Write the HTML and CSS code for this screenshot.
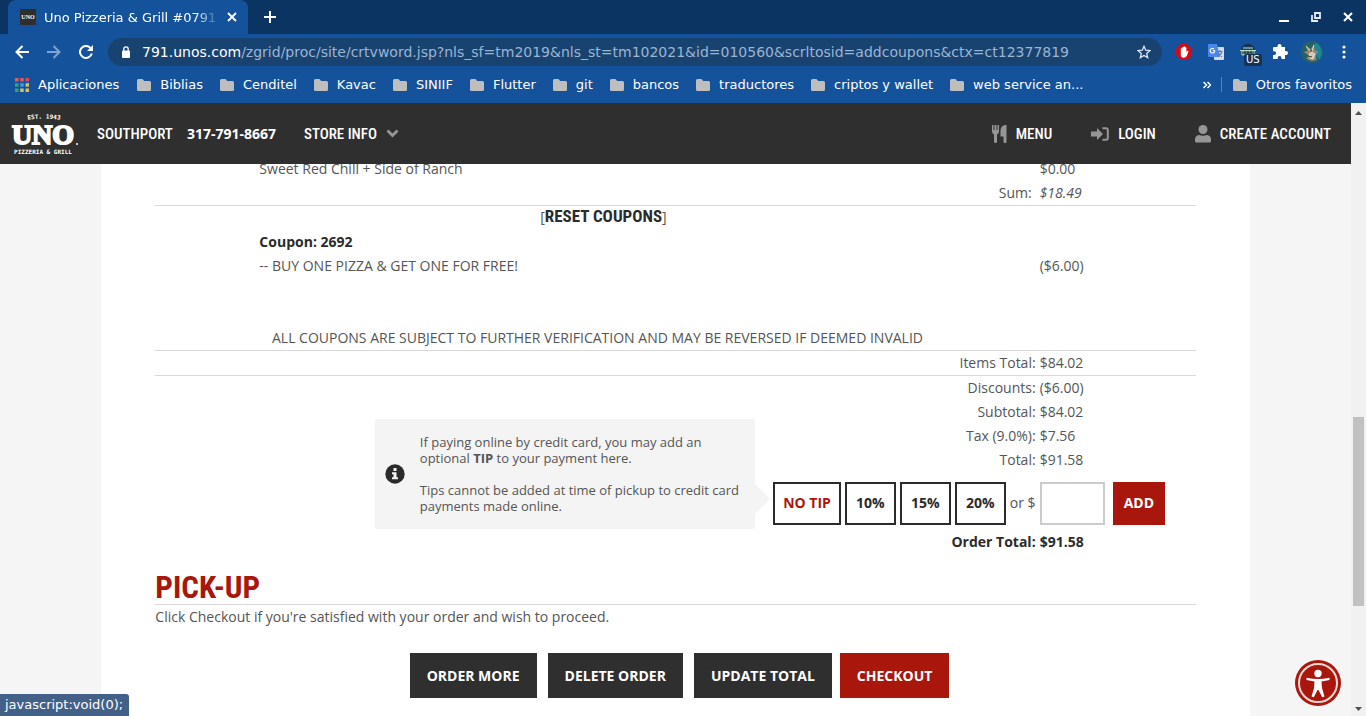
FILE: index.html
```html
<!DOCTYPE html>
<html lang="en">
<head>
<meta charset="utf-8">
<title>Uno Pizzeria &amp; Grill #0791</title>
<link rel="stylesheet" href="styles.css">
</head>
<body>
<svg class="defs" width="0" height="0" aria-hidden="true">
  <symbol id="folder" viewBox="0 0 14 12"><path d="M1.5 0h4l1.7 2H12.500Q14 2 14 3.500v7q0 1.500-1.500 1.500h-11Q0 12 0 10.500v-9Q0 0 1.500 0z" fill="#bebebe"/></symbol>
</svg>
<div class="titlebar">
  <div class="tab">
    <svg class="favicon" width="16" height="16" viewBox="0 0 16 16"><rect width="16" height="16" fill="#302d2d"/><text x="8" y="10" text-anchor="middle" class="favicon-text">UNO</text></svg>
    <span class="tab-title">Uno Pizzeria &amp; Grill #0791</span>
    <button class="plain" aria-label="Close tab"><svg width="10" height="10" viewBox="0 0 10 10"><path d="M1 1l8 8M9 1l-8 8" stroke="#fff" stroke-width="1.800"/></svg></button>
  </div>
  <button class="plain new-tab" aria-label="New tab"><svg width="12" height="12" viewBox="0 0 12 12"><path d="M6 0v12M0 6h12" stroke="#fff" stroke-width="2"/></svg></button>
  <div class="window-buttons">
    <button class="plain" aria-label="Minimize"><svg width="10" height="10" viewBox="0 0 10 10"><path d="M0 9h10" stroke="#fff" stroke-width="2"/></svg></button>
    <button class="plain" aria-label="Restore"><svg width="10" height="10" viewBox="0 0 10 10"><path d="M4 1h5v5H4zM1 3v6h6" fill="none" stroke="#e4edf7" stroke-width="1.800"/></svg></button>
    <button class="plain" aria-label="Close"><svg width="10" height="10" viewBox="0 0 10 10"><path d="M1 1l8 8M9 1l-8 8" stroke="#fff" stroke-width="2"/></svg></button>
  </div>
</div>
<div class="toolbar">
  <button class="plain" aria-label="Back"><svg width="14" height="14" viewBox="0 0 14 14"><path d="M14 7H1.500M7.500 1l-6 6 6 6" fill="none" stroke="#fff" stroke-width="2"/></svg></button>
  <button class="plain" aria-label="Forward"><svg width="14" height="14" viewBox="0 0 14 14"><path d="M0 7h12.500M6.500 1l6 6-6 6" fill="none" stroke="#7ea4d3" stroke-width="2"/></svg></button>
  <button class="plain" aria-label="Reload"><svg width="14" height="14" viewBox="0 0 14 14"><path d="M11.500 3A6 6 0 1 0 12.800 8.500" fill="none" stroke="#fff" stroke-width="2"/><path d="M14 0v6H8z" fill="#fff"/></svg></button>
  <div class="address">
    <svg width="8" height="12" viewBox="0 0 8 12"><rect y="4.500" width="8" height="7.500" rx="1" fill="#fff"/><path d="M1.800 5V3a2.200 2.200 0 0 1 4.400 0v2" fill="none" stroke="#fff" stroke-width="1.300"/></svg>
    <div class="url"><span class="host">791.unos.com</span>/zgrid/proc/site/crtvword.jsp?nls_sf=tm2019&amp;nls_st=tm102021&amp;id=010560&amp;scrltosid=addcoupons&amp;ctx=ct12377819</div>
    <button class="plain" aria-label="Bookmark this page"><svg width="14" height="14" viewBox="0 0 14 14"><path d="M7 1.300l1.700 3.900 4.200.4-3.200 2.800 1 4.200L7 10.400l-3.700 2.200 1-4.200L1.100 5.600l4.200-.4z" fill="none" stroke="#dce6f2" stroke-width="1.300"/></svg></button>
  </div>
  <div class="extensions">
    <button class="plain" aria-label="Ad blocker"><svg width="16" height="16" viewBox="0 0 16 16"><path d="M4.800 0h6.400L16 4.800v6.400L11.200 16H4.800L0 11.200V4.800z" fill="#d00d16"/><path d="M4.800 8V4.500q.7-.8 1.400 0V3.300q.7-.8 1.400 0v-.6q.7-.7 1.400 0v.8q.7-.7 1.400 0V8l1-1.200q1.200-.4 1.200.3L11 11.500q-1 2.200-3.200 2.200-3 0-3-3.200z" fill="#fff"/></svg></button>
    <button class="plain" aria-label="Translate"><svg width="16" height="16" viewBox="0 0 16 16"><rect x="6" y="3" width="10" height="13" rx="1" fill="#d6dbe3"/><path d="M0 1q0-1 1-1h8l3 13H1q-1 0-1-1z" fill="#4a86ee"/><path d="M6.800 6.500H4.800M6.800 6.700A2.300 2.300 0 1 1 6 5" fill="none" stroke="#fff" stroke-width="1.100"/><path d="M9.500 7.500h5M12 6v1.500M14 7.500q-1 3.500-4 5M10.500 9l3.500 4" fill="none" stroke="#66788f" stroke-width="1.100"/></svg></button>
    <button class="plain vpn" aria-label="VPN location US"><svg width="16" height="16" viewBox="0 0 16 16"><path d="M1 7h14v4H1z" fill="#6fa58c"/><g fill="none" stroke="#1c2f3c" stroke-width="1.200"><path d="M1.500 6Q3 .7 8 .7T14.500 6M5 9V4q1-3 3-3t3 3v5M8 1v9M2 9h12"/></g><path d="M3 4h10M0 6.500h16M2 11h8" stroke="#b5dcc4" stroke-width="1"/></svg><span class="vpn-badge">US</span></button>
    <button class="plain" aria-label="Extensions"><svg width="16" height="16" viewBox="0 0 16 16"><path d="M2 3h3.500V2a2 2 0 0 1 4 0v1H13v4h1a2 2 0 0 1 0 4h-1v4H9.500v-1a1.900 1.900 0 0 0-3.800 0v1H1v-4h1.200a1.900 1.900 0 0 0 0-3.800H1V4q0-1 1-1z" fill="#fff"/></svg></button>
    <button class="plain" aria-label="Profile"><svg width="22" height="22" viewBox="0 0 22 22"><circle cx="11" cy="11" r="11" fill="#24616b"/><path d="M14 1.500a10.500 10.500 0 0 1 4 17l-4-5z" fill="#1788a0"/><path d="M5 5l5 3 3-5 .8 6 3.700 2-3 3 1 5-5 1-5-2 2-4-5-3 4-1z" fill="#9b8b6c"/><path d="M5 5l4 5M13 4l-2 6M8 13l3-2 3 2-2 5-3-1z" stroke="#e0ddc8" fill="#d2cbb8"/><path d="M9 9l2 1M7 15l4 1" stroke="#3a3228"/></svg></button>
    <button class="plain" aria-label="Browser menu"><svg width="4" height="14" viewBox="0 0 4 14"><g fill="#fff"><circle cx="2" cy="2" r="1.600"/><circle cx="2" cy="7" r="1.600"/><circle cx="2" cy="12" r="1.600"/></g></svg></button>
  </div>
</div>
<nav class="bookmarks" aria-label="Bookmarks">
  <a class="apps" href="#"><svg width="14" height="14" viewBox="0 0 14 14"><path d="M0 0h3.500v3.500H0zM5.200 0h3.500v3.500H5.200z" fill="#e05a5a"/><path d="M10.500 0H14v3.500h-3.500z" fill="#d84b55"/><path d="M0 5.200h3.500v3.500H0z" fill="#35a27a"/><path d="M5.200 5.200h3.500v3.500H5.200z" fill="#4a94f0"/><path d="M10.500 5.200H14v3.500h-3.500z" fill="#d9be5e"/><path d="M0 10.500h3.500V14H0z" fill="#35a27a"/><path d="M5.200 10.500h3.500V14H5.200zM10.500 10.500H14V14h-3.500z" fill="#d9be5e"/></svg>Aplicaciones</a>
  <a href="#"><svg width="14" height="12"><use href="#folder"/></svg>Biblias</a>
  <a href="#"><svg width="14" height="12"><use href="#folder"/></svg>Cenditel</a>
  <a href="#"><svg width="14" height="12"><use href="#folder"/></svg>Kavac</a>
  <a href="#"><svg width="14" height="12"><use href="#folder"/></svg>SINIIF</a>
  <a href="#"><svg width="14" height="12"><use href="#folder"/></svg>Flutter</a>
  <a href="#"><svg width="14" height="12"><use href="#folder"/></svg>git</a>
  <a href="#"><svg width="14" height="12"><use href="#folder"/></svg>bancos</a>
  <a href="#"><svg width="14" height="12"><use href="#folder"/></svg>traductores</a>
  <a href="#"><svg width="14" height="12"><use href="#folder"/></svg>criptos y wallet</a>
  <a href="#"><svg width="14" height="12"><use href="#folder"/></svg>web service an...</a>
  <div class="bookmarks-end">
    <button class="plain" aria-label="More bookmarks"><svg width="8" height="8" viewBox="0 0 8 8"><path d="M.500 1l3 3-3 3M4.500 1l3 3-3 3" fill="none" stroke="#fff" stroke-width="1.500"/></svg></button>
    <a class="other" href="#"><svg width="14" height="12"><use href="#folder"/></svg>Otros favoritos</a>
  </div>
</nav>
<div class="viewport">
  <div class="page">
    <header class="site-header">
      <a class="logo" href="#" aria-label="Uno Pizzeria and Grill">
        <svg width="68" height="42" viewBox="0 0 68 42" fill="#fff">
          <defs><path id="arc" d="M12 8Q34 3 56 8"/></defs>
          <text class="logo-small"><textPath href="#arc" startOffset="50%" text-anchor="middle">EST. 1943</textPath></text>
          <text class="logo-main" x="33" y="31" text-anchor="middle">UNO</text>
          <circle cx="67" cy="31" r="1"/>
          <text class="logo-small" x="33" y="41" text-anchor="middle">PIZZERIA &amp; GRILL</text>
        </svg>
      </a>
      <a class="store" href="#">SOUTHPORT</a>
      <a class="phone" href="#">317-791-8667</a>
      <button class="plain nav-item store-info">STORE INFO<svg width="13" height="9" viewBox="0 0 13 9"><path d="M1.500 1.500l5 5 5-5" fill="none" stroke="#969696" stroke-width="2.800"/></svg></button>
      <nav class="site-nav">
        <a class="nav-item" href="#"><svg width="15" height="18" viewBox="0 0 15 18" fill="#969696"><path d="M0 0h1.500v5H2.500V0h2v5h1V0H7v6.500Q7 8.500 5 9.500V17q0 1-1.500 1T2 17V9.500Q0 8.500 0 6.500zM14.500 0v17q0 1-1.500 1t-1.500-1v-5.500H8.500V6q0-5 4.500-6z"/></svg>MENU</a>
        <a class="nav-item" href="#"><svg width="18" height="14" viewBox="0 0 18 14"><path d="M0 4.500h6V1l6 6-6 6V9.500H0z" fill="#969696"/><path d="M11.500 1.200H15q1.800 0 1.800 1.800v8q0 1.800-1.800 1.800h-3.500" fill="none" stroke="#969696" stroke-width="2"/></svg>LOGIN</a>
        <a class="nav-item" href="#"><svg width="16" height="18" viewBox="0 0 16 18" fill="#969696"><circle cx="8" cy="4.500" r="4.500"/><path d="M0 16v-1.500q0-4 4-4.500 4 1.500 8 0 4 .5 4 4.500V16q0 1.500-1.500 1.500h-13Q0 17.500 0 16z"/></svg>CREATE ACCOUNT</a>
      </nav>
    </header>
    <main class="content">
      <table class="order">
        <colgroup><col class="col-indent"><col class="col-item"><col class="col-price"></colgroup>
        <tbody>
        <tr><td></td><td>Sweet Red Chill + Side of Ranch</td><td>$0.00</td></tr>
        <tr class="ruled"><td></td><td class="label sum">Sum:</td><td><em>$18.49</em></td></tr>
        <tr><td class="reset" colspan="2">[<a href="#">RESET COUPONS</a>]</td><td></td></tr>
        <tr><td></td><td class="strong">Coupon: 2692</td><td></td></tr>
        <tr><td></td><td>-- BUY ONE PIZZA &amp; GET ONE FOR FREE!</td><td>($6.00)</td></tr>
        <tr class="notice ruled"><td colspan="2">ALL COUPONS ARE SUBJECT TO FURTHER VERIFICATION AND MAY BE REVERSED IF DEEMED INVALID</td><td></td></tr>
        <tr class="ruled"><td></td><td class="label">Items Total:</td><td>$84.02</td></tr>
        <tr><td></td><td class="label">Discounts:</td><td>($6.00)</td></tr>
        <tr><td></td><td class="label">Subtotal:</td><td>$84.02</td></tr>
        <tr><td></td><td class="label">Tax (9.0%):</td><td>$7.56</td></tr>
        <tr><td></td><td class="label">Total:</td><td>$91.58</td></tr>
        <tr class="tip-row">
          <td colspan="2">
            <div class="tips">
              <div class="tips-anchor">
                <aside class="tip-note">
                  <svg width="20" height="20" viewBox="0 0 20 20"><circle cx="10" cy="10" r="9.700" fill="#2b2b2b"/><path d="M8.500 4h3v3h-3zM7 8.300h4.500v5H13v2H7v-2h1.500v-3H7z" fill="#f4f4f4"/></svg>
                  <div><p>If paying online by credit card, you may add an optional <b>TIP</b> to your payment here.</p><p>Tips cannot be added at time of pickup to credit card payments made online.</p></div>
                </aside>
                <button class="tip selected">NO TIP</button>
              </div>
              <button class="tip">10%</button>
              <button class="tip">15%</button>
              <button class="tip">20%</button>
              <label for="tip-amount">or $</label>
            </div>
          </td>
          <td><div class="custom-tip"><input id="tip-amount" type="text"><button class="add">ADD</button></div></td>
        </tr>
        <tr class="strong"><td></td><td class="label">Order Total:</td><td>$91.58</td></tr>
        </tbody>
      </table>
      <h2>PICK-UP</h2>
      <p class="hint">Click Checkout if you're satisfied with your order and wish to proceed.</p>
      <div class="actions">
        <button class="action">ORDER MORE</button>
        <button class="action">DELETE ORDER</button>
        <button class="action">UPDATE TOTAL</button>
        <button class="action checkout">CHECKOUT</button>
      </div>
    </main>
  </div>
  <div class="scrollbar" aria-hidden="true">
    <svg width="7" height="4" viewBox="0 0 7 4"><path d="M0 4l3.500-4L7 4z" fill="#505050"/></svg>
    <div class="track"><div class="thumb"></div></div>
    <svg width="7" height="4" viewBox="0 0 7 4"><path d="M0 0l3.500 4L7 0z" fill="#505050"/></svg>
  </div>
  <button class="plain accessibility" aria-label="Accessibility options"><svg width="46" height="46" viewBox="0 0 46 46"><circle cx="23" cy="23" r="23" fill="#a8160c"/><circle cx="23" cy="23" r="19" fill="none" stroke="#f6d9d6" stroke-width="2"/><g fill="#fff"><circle cx="23" cy="13.500" r="3.700"/><path d="M11.500 17.800q6 1.200 11.500 1.200t11.500-1.200v2.200l-8 1.500.5 6.500 2.500 8.500-2.300.8L23.500 30h-1l-3.700 7.300-2.300-.8L19 28l.5-6.500-8-1.500z"/></g></svg></button>
  <div class="status">javascript:void(0);</div>
</div>
</body>
</html>
```
FILE: styles.css
```css
* { box-sizing: border-box; }
body {
  margin: 0;
  height: 100vh;
  display: flex;
  flex-direction: column;
  overflow: hidden;
  font: 13px "DejaVu Sans", sans-serif;
  color: #fff;
  background: #14529b;
}
a { color: inherit; text-decoration: none; }
svg { display: block; flex: none; }
button, input { font: inherit; }
p, h2 { margin: 0; }
.defs { position: absolute; }
.plain { padding: 0; border: 0; background: none; color: inherit; flex: none; }

/* Browser frame */
.titlebar { height: 34px; flex: none; display: flex; align-items: center; background: #0b3462; }
.tab {
  width: 240px; height: 34px; margin-left: 8px; padding: 0 11px 0 12px;
  display: flex; align-items: center;
  background: #14529b; border-radius: 8px 8px 0 0;
}
.favicon-text { font: bold 6px "Liberation Serif", serif; fill: #fff; }
.tab-title {
  flex: 1; margin: 0 11px 0 8px; overflow: hidden; white-space: nowrap;
  mask-image: linear-gradient(to right, #000 150px, transparent 176px);
}
.new-tab { margin-left: 16px; }
.window-buttons { margin-left: auto; margin-right: 13px; display: flex; gap: 22px; }
.toolbar { height: 36px; flex: none; display: flex; align-items: center; gap: 18px; padding: 0 20px 0 15px; }
.address {
  flex: 1; height: 28px; margin-left: -3px; padding: 0 11px 0 14px;
  display: flex; align-items: center; gap: 12px;
  border-radius: 14px; background: #184371;
}
.url { flex: 1; font-size: 14px; color: #9bb5d3; white-space: nowrap; overflow: hidden; }
.host { color: #fff; }
.extensions { display: flex; align-items: center; gap: 16px; margin-left: -4px; }
.extensions .plain:nth-child(n+5) { margin-left: -3px; }
.extensions .plain:last-child { margin-left: 3px; }
.vpn { position: relative; }
.vpn-badge {
  position: absolute; left: 4px; top: 10px; padding: 0 2px;
  font-size: 10px; line-height: 12px; background: #173252; border-radius: 2px;
}
.bookmarks { height: 33px; flex: none; display: flex; align-items: center; gap: 17px; padding: 0 14px 4px 15px; white-space: nowrap; }
.bookmarks a { display: flex; align-items: center; gap: 9px; }
.bookmarks .apps { margin-right: 1px; }
.bookmarks-end { margin-left: auto; display: flex; align-items: center; gap: 10px; }
.bookmarks-end .other { padding-left: 11px; border-left: 1px solid #4e83c0; }

/* Page area */
.viewport { position: relative; flex: 1; min-height: 0; display: flex; background: #f5f5f5; }
.page { flex: 1; min-width: 0; overflow: hidden; }
.site-header {
  position: relative; z-index: 1;
  height: 61px; padding: 0 20px 0 10px;
  display: flex; align-items: center;
  background: #2f2f2f;
  font: 500 15px "Roboto Condensed", "Liberation Sans Narrow", sans-serif;
}
.logo-small { font: bold 6px "DejaVu Sans Mono", monospace; }
.logo-main { font: bold 28px "Liberation Serif", serif; stroke: #fff; stroke-width: 2px; }
.store { margin-left: 19px; }
.phone { margin-left: 14px; font: bold 14px "Open Sans", sans-serif; }
.nav-item { display: flex; align-items: center; gap: 9px; }
.store-info { margin-left: 28px; }
.site-nav { margin-left: auto; display: flex; gap: 39px; }
.content {
  width: 85%; min-height: 100%;
  margin: -7px auto 0; padding: 0 54px;
  background: #fff; color: #555;
  font: 14px/24px "Open Sans", sans-serif;
}
.order { width: 100%; table-layout: fixed; border-collapse: collapse; }
.col-indent { width: 10%; }
.col-price { width: 15%; }
.order td { height: 24px; padding: 0; }
.ruled { border-bottom: 1px solid #d9d9d9; }
.order .label { text-align: right; padding-right: 4px; }
.order .sum { padding-right: 8px; }
.order .strong { font-weight: bold; color: #2b2b2b; }
.order .reset { text-align: center; padding-left: 12px; line-height: 20px; vertical-align: top; }
.reset a { color: #2b2b2b; font: bold 17px/20px "Roboto Condensed", "Liberation Sans Narrow", sans-serif; }
.order .notice td { height: 73px; text-align: center; vertical-align: bottom; }
.order .tip-row td { height: 58px; padding-top: 4px; }
.tips { display: flex; justify-content: flex-end; align-items: center; gap: 4px; padding-right: 4px; }
.tips-anchor { position: relative; }
.tip-note {
  position: absolute; right: 86px; top: -63px; width: 380px; height: 110px;
  padding: 0 11px 0 10px; display: flex; align-items: center; gap: 15px;
  background: #f4f4f4; border-radius: 2px; font-size: 13px; line-height: 16px;
}
.tip-note p + p { margin-top: 16px; }
.tip-note::after {
  content: ""; position: absolute; left: 100%; top: 65px;
  border: 15px solid transparent; border-left-color: #f4f4f4; border-right-width: 0;
}
.tip {
  height: 43px; min-width: 51px; padding: 0 8px; border: 2px solid #2b2b2b; background: #fff;
  color: #2b2b2b; font-weight: bold;
}
.tip.selected { color: #a8160c; }
.custom-tip { display: flex; gap: 8px; }
.custom-tip input { width: 65px; height: 43px; border: 2px solid #ccc; background: #fff; }
.add { height: 43px; padding: 0 11px; border: 0; background: #a8160c; color: #fff; font-weight: bold; }
h2 {
  margin-top: 18px; border-bottom: 1px solid #d9d9d9; color: #a8160c;
  font: bold 31px/32px "Roboto Condensed", "Liberation Sans Narrow", sans-serif;
}
.actions { margin: 24px 0 0; display: flex; justify-content: center; gap: 11px; padding-left: 8px; }
.action { height: 45px; padding: 0 17px; border: 0; background: #2f2f2f; color: #fff; font-weight: bold; }
.checkout { margin-left: -3px; background: #a8160c; }
.scrollbar { width: 15px; padding: 8px 0 5px; display: flex; flex-direction: column; align-items: center; background: #f1f1f1; }
.track { flex: 1; align-self: stretch; padding: 0 2px; display: grid; grid-template-rows: 51% 32% 1fr; }
.thumb { grid-row: 2; background: #c1c1c1; }
.accessibility { position: absolute; right: 25px; bottom: 10px; }
.status {
  position: absolute; left: 0; bottom: 0; padding: 0 6px 0 5px; line-height: 22px;
  background: #436188; border-radius: 0 3px 0 0;
}
```
